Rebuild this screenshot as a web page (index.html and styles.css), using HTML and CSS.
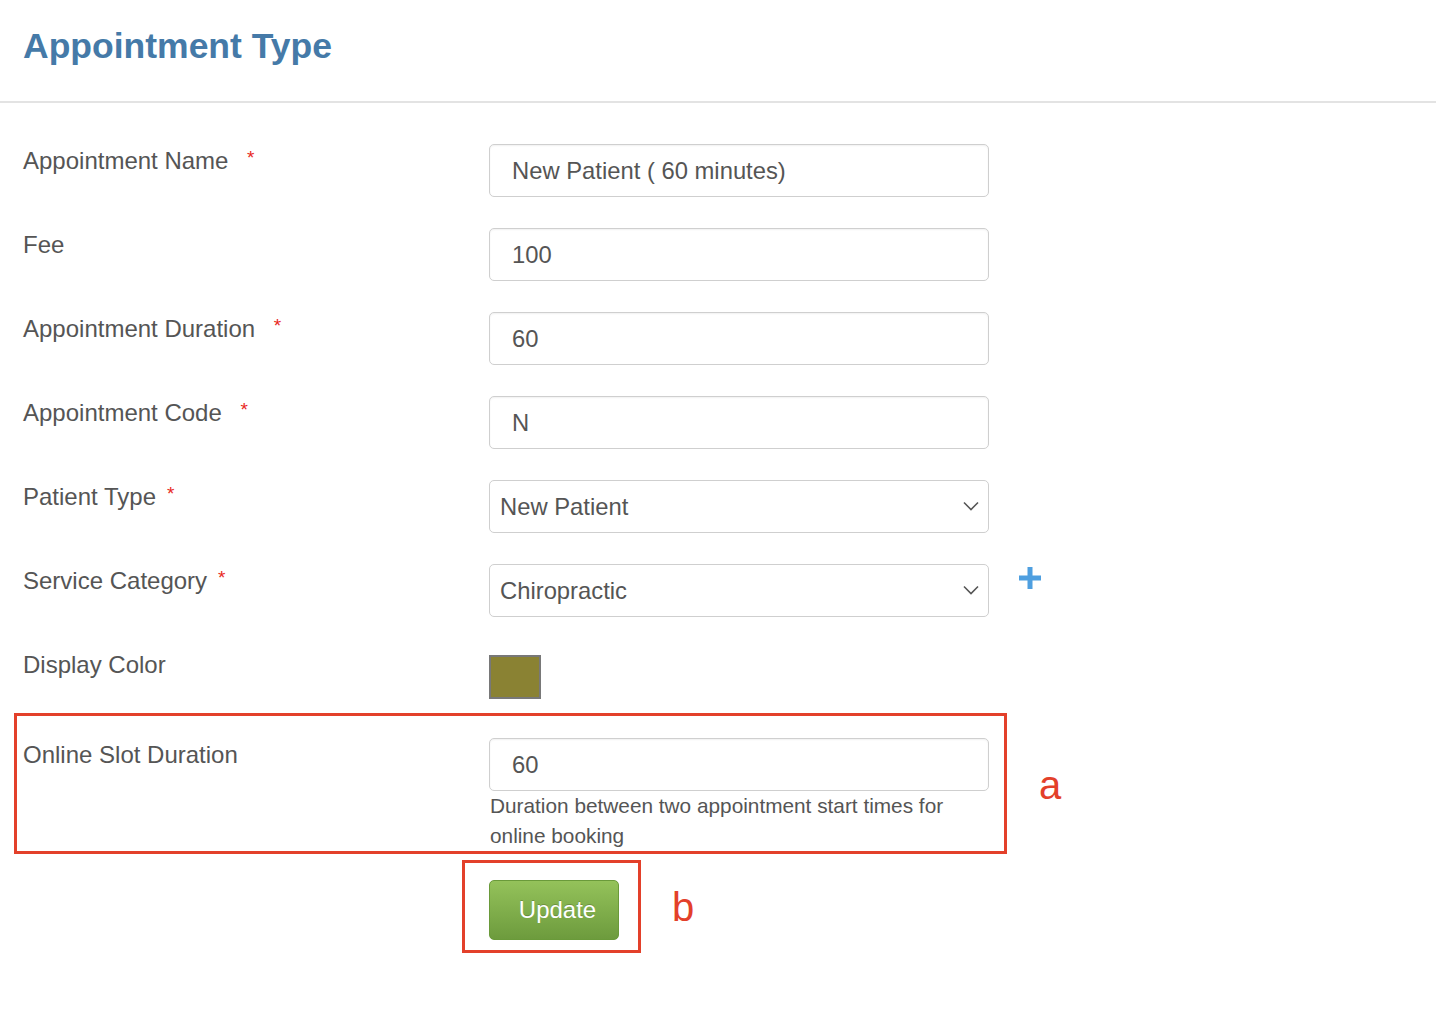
FILE: index.html
```html
<!DOCTYPE html>
<html>
<head>
<meta charset="utf-8">
<link rel="stylesheet" href="styles.css">
</head>
<body>
<header class="page-head">
  <h1 class="title">Appointment Type</h1>
</header>
<form class="form">
  <div class="row">
    <label class="label">Appointment Name <span class="req">*</span></label>
    <div class="field"><input class="input" type="text" value="New Patient ( 60 minutes)"></div>
  </div>
  <div class="row">
    <label class="label">Fee</label>
    <div class="field"><input class="input" type="text" value="100"></div>
  </div>
  <div class="row">
    <label class="label">Appointment Duration <span class="req">*</span></label>
    <div class="field"><input class="input" type="text" value="60"></div>
  </div>
  <div class="row">
    <label class="label">Appointment Code <span class="req">*</span></label>
    <div class="field"><input class="input" type="text" value="N"></div>
  </div>
  <div class="row">
    <label class="label">Patient Type<span class="req req-tight">*</span></label>
    <div class="field select-wrap">
      <select class="select"><option>New Patient</option></select>
      <svg class="chevron" width="16" height="10" viewBox="0 0 16 10"><path d="M1 1.5 L8 8.5 L15 1.5" fill="none" stroke="#555" stroke-width="1.6"/></svg>
    </div>
  </div>
  <div class="row">
    <label class="label">Service Category<span class="req req-tight">*</span></label>
    <div class="field select-wrap">
      <select class="select"><option>Chiropractic</option></select>
      <svg class="chevron" width="16" height="10" viewBox="0 0 16 10"><path d="M1 1.5 L8 8.5 L15 1.5" fill="none" stroke="#555" stroke-width="1.6"/></svg>
    </div>
    <div class="extra">
      <svg class="plus" width="22" height="22" viewBox="0 0 22 22"><rect x="8.5" y="0" width="5" height="22" fill="#4e9fe0"/><rect x="0" y="8.5" width="22" height="5" fill="#4e9fe0"/></svg>
    </div>
  </div>
  <div class="row row-color">
    <label class="label">Display Color</label>
    <div class="field"><div class="swatch"></div></div>
  </div>
  <div class="annot-line">
    <div class="box box-a">
      <div class="row row-inbox">
        <label class="label">Online Slot Duration</label>
        <div class="field">
          <input class="input" type="text" value="60">
          <p class="help">Duration between two appointment start times for online booking</p>
        </div>
      </div>
    </div>
    <span class="annot annot-a">a</span>
  </div>
  <div class="annot-line annot-line-b">
    <div class="box box-b">
      <button class="btn" type="button">Update</button>
    </div>
    <span class="annot annot-b">b</span>
  </div>
</form>
</body>
</html>
```
FILE: styles.css
```css
* { box-sizing: border-box; }
body {
  margin: 0;
  background: #fff;
  font-family: "Liberation Sans", Arial, Helvetica, sans-serif;
  color: #555;
}
.page-head {
  height: 103px;
  border-bottom: 2px solid #e3e3e3;
  padding: 24px 0 0 23px;
}
.title {
  margin: 0;
  font-size: 35.5px;
  line-height: 44px;
  font-weight: bold;
  color: #457aa8;
}
.form {
  padding-top: 41px;
}
.row {
  display: grid;
  grid-template-columns: 465px 500px auto;
  padding-left: 24px;
  margin-bottom: 31px;
}
.label {
  font-size: 24px;
  line-height: 32px;
  padding-top: 1px;
  color: #555;
  margin-left: -1px;
}
.req {
  color: #e8281e;
  font-size: 19px;
  vertical-align: top;
  position: relative;
  top: -3px;
  margin-left: 12px;
}
.req-tight { margin-left: 11px; }
.field { position: relative; }
.input {
  display: block;
  width: 500px;
  height: 53px;
  border: 1.5px solid #cfcfcf;
  border-radius: 5px;
  box-shadow: inset 0 1px 2px rgba(0,0,0,0.06);
  padding: 0 0 0 22px;
  font-family: "Liberation Sans", Arial, sans-serif;
  font-size: 23.8px;
  color: #555;
  background: #fff;
  outline: none;
}
.select {
  display: block;
  width: 500px;
  height: 53px;
  border: 1.5px solid #cfcfcf;
  border-radius: 5px;
  padding: 0 0 0 10px;
  font-family: "Liberation Sans", Arial, sans-serif;
  font-size: 23.8px;
  color: #555;
  background: #fff;
  -webkit-appearance: none;
  appearance: none;
  outline: none;
}
.chevron {
  position: absolute;
  right: 10px;
  top: 21px;
}
.extra { padding-left: 30px; padding-top: 3px; }
.plus { display: block; }
.row-color { margin-bottom: 14px; }
.swatch {
  width: 52px;
  height: 44px;
  margin-top: 7px;
  background: #8a8233;
  border: 2px solid #787878;
}
.annot-line {
  display: flex;
  align-items: flex-start;
}
.box {
  border: 3px solid #e3402a;
}
.box-a {
  margin-left: 14px;
  width: 993px;
  padding: 22px 15px 0 7px;
}
.row-inbox {
  padding-left: 0;
  margin-bottom: 0;
}
.help {
  margin: 0 0 0 1px;
  font-size: 20.8px;
  line-height: 30px;
  color: #555;
}
.annot {
  color: #e3402a;
  font-size: 40px;
  line-height: 46px;
}
.annot-a {
  margin-left: 32px;
  margin-top: 49px;
}
.annot-line-b { margin-top: 6px; }
.box-b {
  margin-left: 462px;
  width: 179px;
  height: 93px;
  padding: 17px 0 0 24px;
}
.btn {
  display: block;
  width: 130px;
  height: 60px;
  border: 1px solid #6a9a3a;
  border-radius: 5px;
  background: linear-gradient(#94c25a, #6d9b3d);
  color: #fff;
  font-family: "Liberation Sans", Arial, sans-serif;
  font-size: 24px;
  text-shadow: 0 -1px 0 rgba(0,0,0,0.2);
  padding: 0 0 0 7px;
}
.annot-b {
  margin-left: 31px;
  margin-top: 24px;
}
```
